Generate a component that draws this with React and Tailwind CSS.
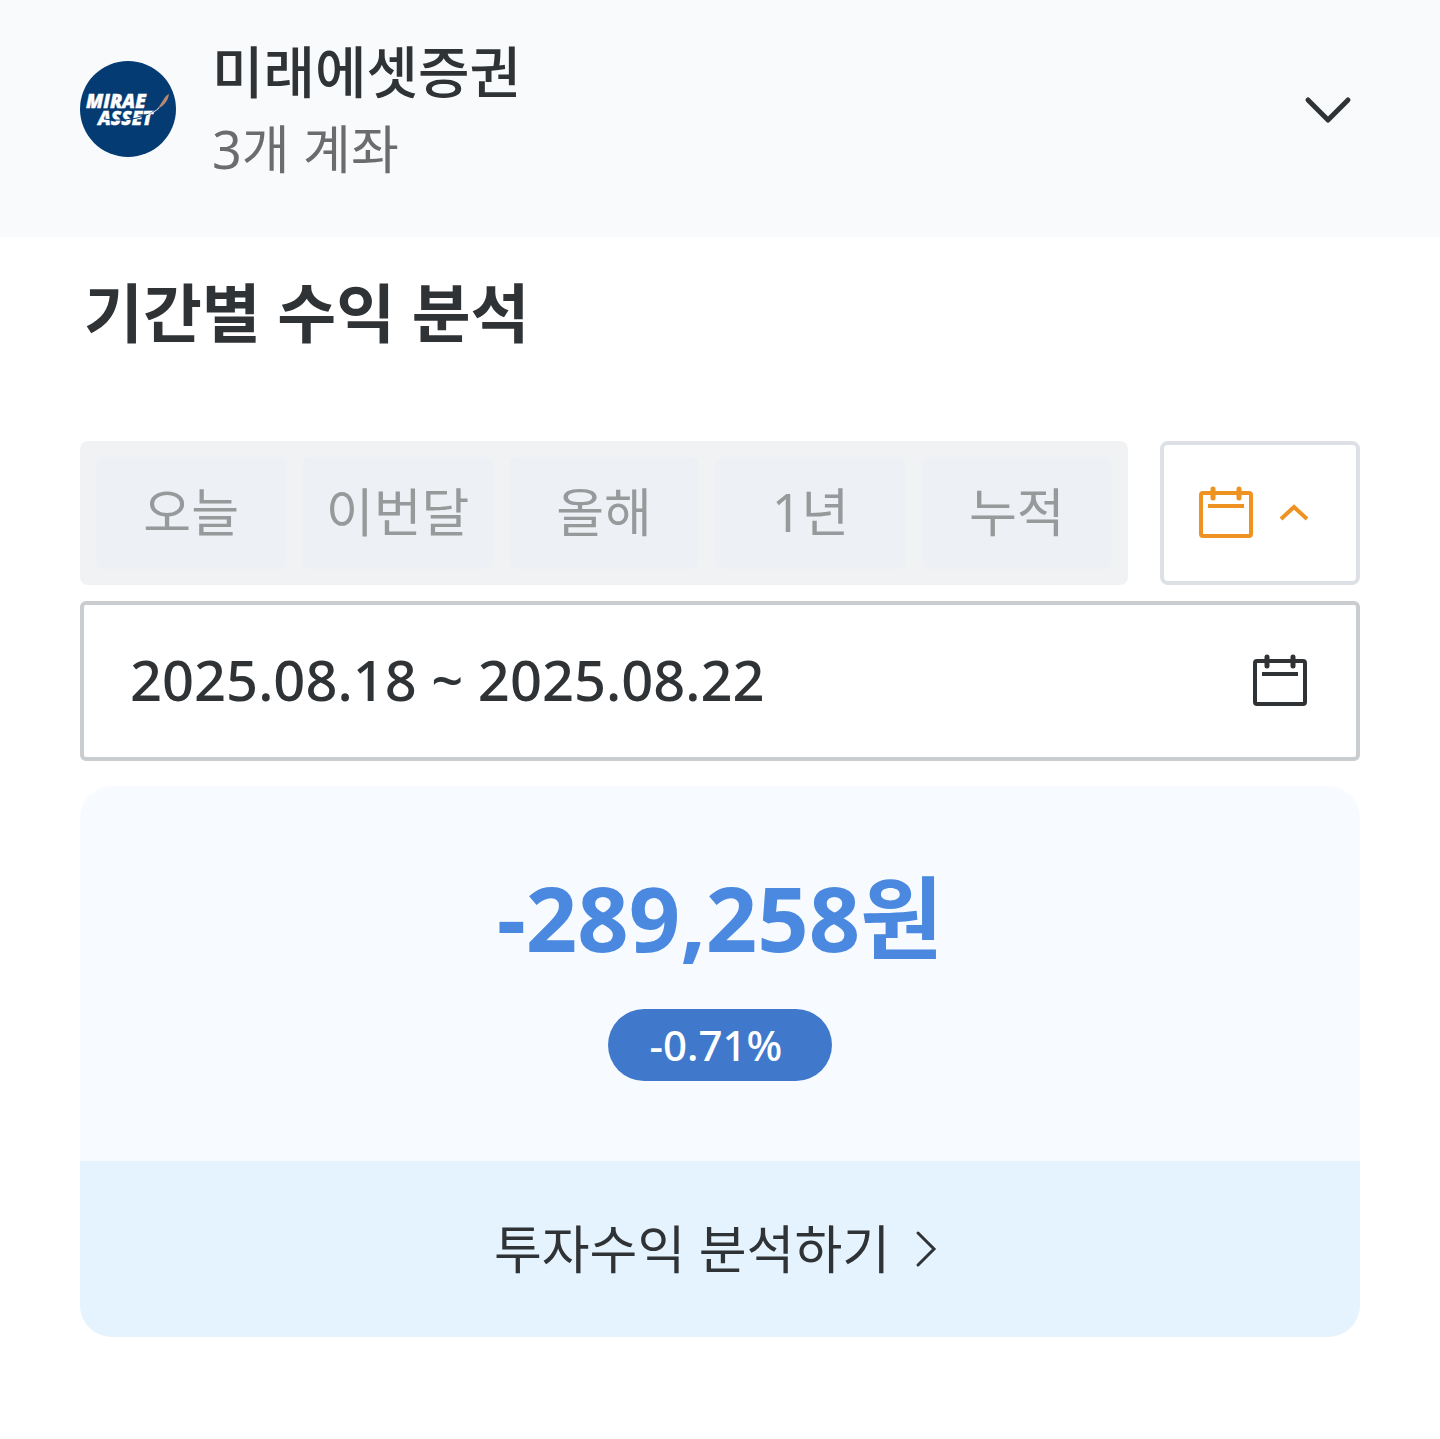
import { useState } from "react";

const periods = ["오늘", "이번달", "올해", "1년", "누적"];

function Logo() {
  return (
    <svg viewBox="0 0 96 96" className="size-24 shrink-0" role="img" aria-label="MIRAE ASSET">
      <circle cx="48" cy="48" r="48" fill="#043b72" />
      <text fill="#fff" stroke="#fff" strokeWidth="0.4" fontFamily="'Open Sans', sans-serif" fontWeight="800" fontStyle="italic" fontSize="19">
        <tspan x="6" y="47">MIRAE</tspan>
        <tspan x="18" y="64">ASSET</tspan>
      </text>
      <path d="M24 58C44 61 62 58 76 49" fill="none" stroke="#043b72" strokeWidth="1" />
      <path d="M68 53C72 52 76 50 79 47" fill="none" stroke="#dfe6ee" strokeWidth="1" />
      <path d="M77 48C82 43 84 35 89 33C88 40 84 45 77 48Z" fill="#b98872" />
    </svg>
  );
}

function CalendarIcon() {
  return (
    <svg viewBox="0 0 56 56" className="size-14" fill="none" stroke="currentColor" strokeWidth="4" aria-hidden="true">
      <rect x="3" y="8" width="50" height="43" rx="2" />
      <path d="M15 4V13M41 4V13" strokeWidth="5" strokeLinecap="round" />
      <path d="M10 21H46" />
    </svg>
  );
}

export default function App() {
  const [showRange, setShowRange] = useState(true);
  const [period, setPeriod] = useState("");

  return (
    <div className="min-h-screen bg-white font-['Noto_Sans','Noto_Sans_CJK_KR',sans-serif] text-[#303335]">
      <header className="flex items-center bg-[#f8fafc] px-20 pt-[31px] pb-[50px]">
        <Logo />
        <div className="ml-9 flex-1">
          <p className="text-[56px] leading-[80px] font-medium">미래에셋증권</p>
          <p className="text-[52px] leading-[76px] text-[#6a6c6e]">3개 계좌</p>
        </div>
        <button type="button" aria-label="계좌 펼치기" className="mr-1">
          <svg viewBox="0 0 56 56" className="size-14" fill="none" stroke="currentColor" strokeWidth="5" strokeLinecap="round" strokeLinejoin="round">
            <path d="M8 19L28 39L48 19" />
          </svg>
        </button>
      </header>

      <main className="px-20 pt-8">
        <h1 className="pl-1 text-[64px] leading-[88px] font-bold">기간별 수익 분석</h1>

        <div className="mt-[84px] flex gap-8">
          <div className="flex flex-1 gap-4 rounded-lg bg-[#f1f2f4] p-4">
            {periods.map((item) => (
              <button
                key={item}
                type="button"
                aria-pressed={period === item}
                onClick={() => setPeriod(item)}
                className="h-28 flex-1 rounded-lg bg-[#edf1f5] pb-0.5 text-[52px] leading-[76px] text-[#98999b]"
              >
                {item}
              </button>
            ))}
          </div>
          <button
            type="button"
            aria-label="기간 직접 선택"
            aria-expanded={showRange}
            onClick={() => setShowRange(!showRange)}
            className="flex w-[200px] items-center gap-6 rounded-lg border-4 border-[#dde1e5] pl-[34px] text-[#ee9322]"
          >
            <CalendarIcon />
            <svg viewBox="0 0 32 32" className="size-8" fill="none" stroke="currentColor" strokeWidth="4" aria-hidden="true">
              <path d="M3 22L16 10L29 22" />
            </svg>
          </button>
        </div>

        {showRange && (
          <button
            type="button"
            className="mt-4 flex h-40 w-full items-center justify-between rounded-md border-4 border-[#c9cdcf] pr-12 pl-[46px] text-[56px] leading-[80px] font-medium"
          >
            <span className="pb-1">2025.08.18 ~ 2025.08.22</span>
            <CalendarIcon />
          </button>
        )}

        <section className="mt-[25px] overflow-hidden rounded-4xl bg-[#f7fbff]">
          <div className="flex flex-col items-center pt-[67px] pb-20">
            <strong className="text-[90px] leading-[128px] font-bold text-[#4a89df]">-289,258원</strong>
            <span className="mt-7 flex h-[72px] w-56 items-center justify-center rounded-full bg-[#4079cb] pr-2 text-[42px] leading-[60px] font-medium text-white">
              -0.71%
            </span>
          </div>
          <a href="#analysis" className="flex h-44 items-center justify-center gap-5 bg-[#e4f3fe] pr-1 text-[52px] leading-[76px]">
            투자수익 분석하기
            <svg viewBox="0 0 32 48" className="h-12 w-8" fill="none" stroke="currentColor" strokeWidth="3" strokeLinecap="round" aria-hidden="true">
              <path d="M8 8L24 24L8 40" />
            </svg>
          </a>
        </section>
      </main>
    </div>
  );
}
